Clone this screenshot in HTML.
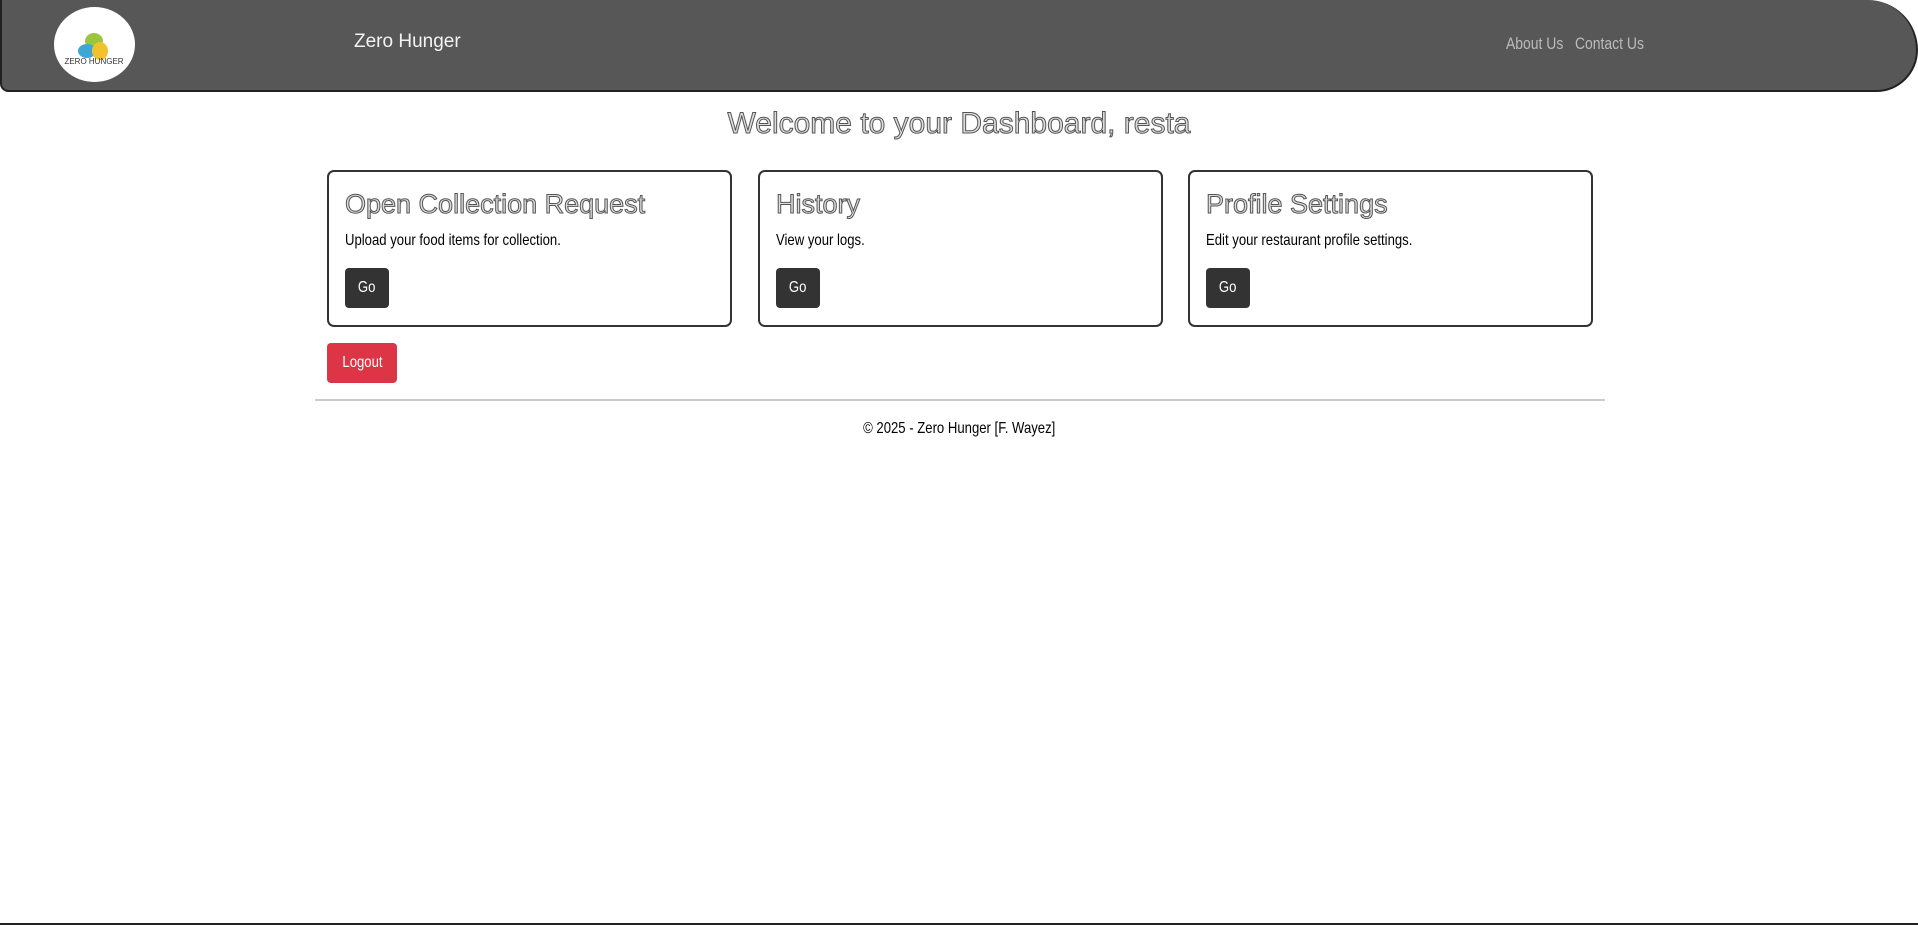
<!DOCTYPE html>
<html><head><meta charset="utf-8"><style>
*{box-sizing:border-box;margin:0;padding:0}
body{width:1918px;height:925px;background:#fff;font-family:"Liberation Sans",sans-serif;color:#111;position:relative;overflow:hidden}
.n{display:inline-block;transform:scaleX(0.82);transform-origin:left center;white-space:nowrap}
.c{transform-origin:center}
.nav{position:absolute;left:0;top:0;width:1918px;height:92px;background:#575757;border:2px solid #222;border-top:none;border-radius:0 60px 50px 10px}
.logo{position:absolute;left:52px;top:7px;width:81px;height:75px;border-radius:50%;background:#fff;overflow:hidden}
.brand{position:absolute;left:352px;top:31px;color:#f2f2f2;font-size:19px}
.links{position:absolute;left:1504px;top:34px;color:#bbb;font-size:17px;width:200px}
h1{position:absolute;top:107px;left:0;width:1918px;text-align:center;font-weight:normal;font-size:30px;color:#ddd;-webkit-text-stroke:1px #555}
.card{position:absolute;top:170px;width:405px;height:157px;border:2px solid #333;border-radius:7px;padding:0 16px}
.card h2{margin-top:17px;font-weight:normal;font-size:27px;color:#ddd;-webkit-text-stroke:1px #555;white-space:nowrap}
.card p{margin-top:12px;font-size:16px;height:18px;color:#000}
.btn{display:block;background:#333;color:#fff;font-size:16px;border-radius:4px;width:44px;height:40px;line-height:40px;text-align:center;margin-top:18px}
.logout{position:absolute;left:327px;top:343px;width:70px;height:40px;line-height:40px;text-align:center;background:#dc3545;color:#fff;border-radius:4px;font-size:16px}
hr{position:absolute;left:315px;top:399px;width:1290px;border:none;border-top:2px solid #ccc}
.foot{position:absolute;top:420px;left:0;width:1918px;text-align:center;font-size:16px;color:#000}
.bot{position:absolute;left:0;bottom:0;width:1918px;height:2px;background:#222}
</style></head><body>
<div class="nav">
<div class="logo"><svg width="81" height="75" viewBox="0 0 81 75">
<ellipse cx="40" cy="34" rx="9" ry="8" fill="#9bc53d"/>
<ellipse cx="33" cy="44" rx="9" ry="7" fill="#3fa7d6"/>
<ellipse cx="46" cy="44" rx="8" ry="9" fill="#f2c12e"/>
<text x="40" y="57" font-size="8" text-anchor="middle" font-family="Liberation Sans" fill="#333">ZERO HUNGER</text></svg></div>
<div class="brand">Zero Hunger</div>
<div class="links"><span class="n">About Us&nbsp;&nbsp;&nbsp;Contact Us</span></div>
</div>
<h1>Welcome to your Dashboard, resta</h1>
<div class="card" style="left:327px"><h2>Open Collection Request</h2><p><span class="n">Upload your food items for collection.</span></p><div class="btn"><span class="n c">Go</span></div></div>
<div class="card" style="left:758px"><h2>History</h2><p><span class="n">View your logs.</span></p><div class="btn"><span class="n c">Go</span></div></div>
<div class="card" style="left:1188px"><h2>Profile Settings</h2><p><span class="n">Edit your restaurant profile settings.</span></p><div class="btn"><span class="n c">Go</span></div></div>
<div class="logout"><span class="n c">Logout</span></div>
<hr>
<div class="foot"><span class="n c">© 2025 - Zero Hunger [F. Wayez]</span></div>
<div class="bot"></div>
</body></html>
